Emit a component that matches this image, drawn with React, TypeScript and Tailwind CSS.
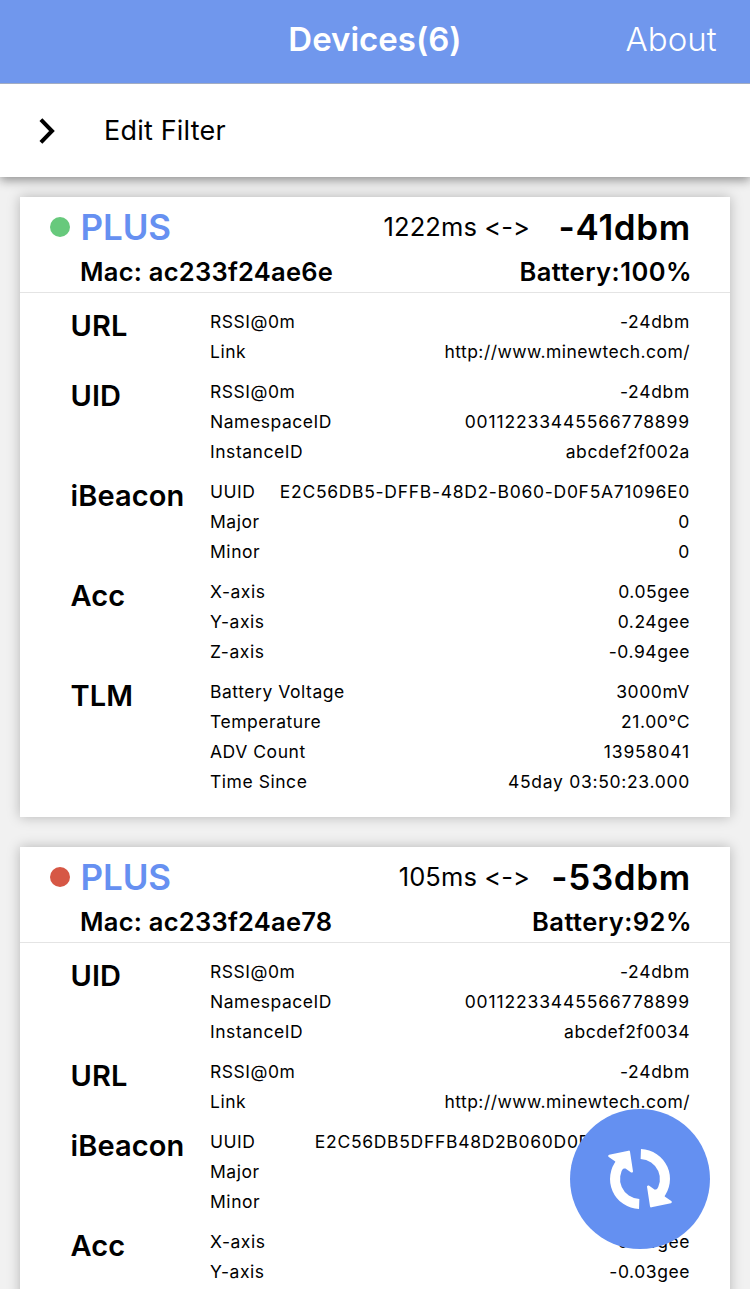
import React from "react";

type Group = { name: string; rows: [string, string][] };
type Device = {
  name: string;
  mac: string;
  interval: string;
  rssi: string;
  battery: string;
  dot: string;
  groups: Group[];
};

const devices: Device[] = [
  {
    name: "PLUS",
    mac: "ac233f24ae6e",
    interval: "1222ms",
    rssi: "-41dbm",
    battery: "100%",
    dot: "bg-[#67c97c]",
    groups: [
      { name: "URL", rows: [["RSSI@0m", "-24dbm"], ["Link", "http://www.minewtech.com/"]] },
      {
        name: "UID",
        rows: [["RSSI@0m", "-24dbm"], ["NamespaceID", "00112233445566778899"], ["InstanceID", "abcdef2f002a"]],
      },
      {
        name: "iBeacon",
        rows: [["UUID", "E2C56DB5-DFFB-48D2-B060-D0F5A71096E0"], ["Major", "0"], ["Minor", "0"]],
      },
      { name: "Acc", rows: [["X-axis", "0.05gee"], ["Y-axis", "0.24gee"], ["Z-axis", "-0.94gee"]] },
      {
        name: "TLM",
        rows: [
          ["Battery Voltage", "3000mV"],
          ["Temperature", "21.00°C"],
          ["ADV Count", "13958041"],
          ["Time Since", "45day 03:50:23.000"],
        ],
      },
    ],
  },
  {
    name: "PLUS",
    mac: "ac233f24ae78",
    interval: "105ms",
    rssi: "-53dbm",
    battery: "92%",
    dot: "bg-[#d65745]",
    groups: [
      {
        name: "UID",
        rows: [["RSSI@0m", "-24dbm"], ["NamespaceID", "00112233445566778899"], ["InstanceID", "abcdef2f0034"]],
      },
      { name: "URL", rows: [["RSSI@0m", "-24dbm"], ["Link", "http://www.minewtech.com/"]] },
      {
        name: "iBeacon",
        rows: [["UUID", "E2C56DB5DFFB48D2B060D0F5A71096E0"], ["Major", "0"], ["Minor", "0"]],
      },
      { name: "Acc", rows: [["X-axis", "0.04gee"], ["Y-axis", "-0.03gee"]] },
    ],
  },
];

// Long digit runs are set a little wider than words, links a little tighter.
function valueTracking(value: string) {
  if (value.startsWith("http")) return "tracking-[0.47px]";
  if (/^\d{8,}$/.test(value)) return "tracking-[0.86px]";
  if (/^(E2C|-24|0$|45day)/.test(value)) return "tracking-[0.7px]";
  return "tracking-[0.55px]";
}

function DeviceCard({ device }: { device: Device }) {
  return (
    <section className="bg-white pb-5 shadow-[0_0_12px_rgba(0,0,0,0.25)]">
      <header className="h-24 border-b border-[#e4e4e4] pl-[30px] pr-10">
        <div className="flex h-[60px] items-center">
          <span className={`size-5 shrink-0 rounded-full ${device.dot}`} />
          <h2 className="ml-[10.5px] flex-1 text-[35px] font-[560] tracking-[-0.1px] text-[#6690f1]">{device.name}</h2>
          <span className="text-[25.5px] tracking-[0.1px]">{device.interval} &lt;-&gt;</span>
          <span className="-mr-[1px] w-[161px] text-right text-[35px] font-semibold tracking-[0.65px]">{device.rssi}</span>
        </div>
        <div className="flex h-[30px] items-center justify-between pl-[30px] text-[25.5px] font-semibold tracking-[0.25px]">
          <span>Mac: {device.mac}</span>
          <span className="-mr-[2px] tracking-[0.45px]">Battery:{device.battery}</span>
        </div>
      </header>
      <div className="flex flex-col gap-[10px] pl-[50px] pr-10 pt-[14px]">
        {device.groups.map((group) => (
          <div key={group.name} className="flex">
            <h3 className="h-[38px] w-[140px] pl-[0.5px] text-[29px] font-semibold leading-[38px] tracking-[0.1px]">{group.name}</h3>
            <dl className="flex-1">
              {group.rows.map(([label, value]) => (
                <div key={label} className="flex h-[30px] items-center justify-between whitespace-nowrap text-[17.5px]">
                  <dt className="tracking-[0.54px]">{label}</dt>
                  <dd className={valueTracking(value)}>{value}</dd>
                </div>
              ))}
            </dl>
          </div>
        ))}
      </div>
    </section>
  );
}

function SyncArrow() {
  return (
    <g>
      <path d="M0.8 -25A25 25 0 0 1 19 16.2" fill="none" stroke="currentColor" strokeWidth="10" />
      <path
        d="M8.2 7.6L14.5 12L20 11L24 18.5L30.6 23L11.2 27.2Z"
        fill="currentColor"
        stroke="currentColor"
        strokeWidth="2.4"
        strokeLinejoin="round"
      />
    </g>
  );
}

export default function App() {
  return (
    <div className="relative h-[1289px] w-[750px] overflow-hidden bg-[#f1f1f1] font-['Inter','Liberation_Sans',sans-serif] text-black">
      <header className="relative z-10 grid h-[84px] grid-cols-[1fr_auto_1fr] items-center border-b border-[#a3adc2] bg-[#7097ed] pb-1 text-[33px] text-white">
        <h1 className="col-start-2 font-semibold">Devices(6)</h1>
        <a className="justify-self-end pr-[33.5px] font-light">About</a>
      </header>
      <div className="relative flex h-[93px] items-center bg-white pl-[38px] shadow-[0_3px_10px_rgba(0,0,0,0.42)]">
        <svg width="20" height="28" viewBox="0 0 20 28" fill="none" stroke="currentColor" strokeWidth="4" aria-hidden="true">
          <path d="M2.9 2.6L14 14L2.9 25.4" />
        </svg>
        <span className="ml-[46px] pt-px text-[27px] tracking-[0.2px]">Edit Filter</span>
      </div>
      <main className="flex flex-col gap-[30px] px-5 pt-5">
        {devices.map((device) => (
          <DeviceCard key={device.mac} device={device} />
        ))}
      </main>
      <button
        aria-label="Refresh"
        className="absolute bottom-10 right-10 grid size-[140px] place-items-center rounded-full bg-[#6490f1] text-white"
      >
        <svg width="68" height="68" viewBox="-34 -34 68 68" aria-hidden="true">
          <SyncArrow />
          <g transform="rotate(180)">
            <SyncArrow />
          </g>
        </svg>
      </button>
    </div>
  );
}
